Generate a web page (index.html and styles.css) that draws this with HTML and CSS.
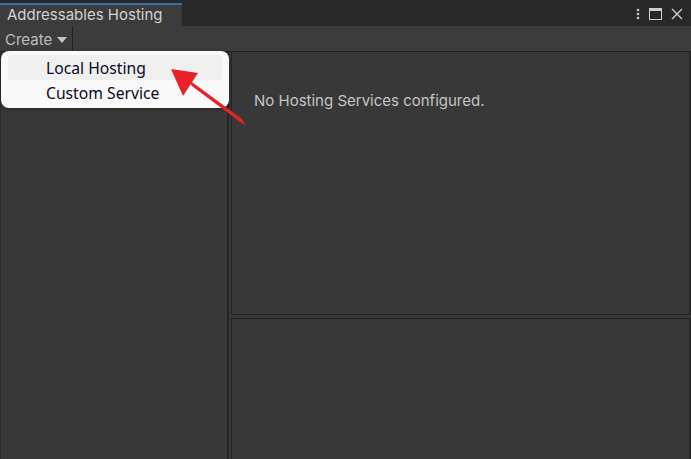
FILE: index.html
```html
<!DOCTYPE html>
<html lang="en">
<head>
    <meta charset="UTF-8">
    <title>Addressables Hosting</title>
    <link rel="stylesheet" href="styles.css">
</head>
<body>
    <div class="window">
        <div class="tabbar">
            <div class="tab">Addressables Hosting</div>
            <div class="win-icons">
                <svg width="4" height="12" viewBox="0 0 4 12"><circle cx="2" cy="2" r="1.3" fill="#c8c8c8"/><circle cx="2" cy="6" r="1.3" fill="#c8c8c8"/><circle cx="2" cy="10" r="1.3" fill="#c8c8c8"/></svg>
                <svg width="13" height="12" viewBox="0 0 13 12"><rect x="0.5" y="0.5" width="12" height="11" fill="none" stroke="#d0d0d0"/><rect x="0.5" y="0.5" width="12" height="2.5" fill="#d0d0d0"/></svg>
                <svg width="12" height="12" viewBox="0 0 12 12"><path d="M1 1 L11 11 M11 1 L1 11" stroke="#d0d0d0" stroke-width="1.4"/></svg>
            </div>
        </div>
        <div class="toolbar">
            <div class="create-btn">Create <span class="caret"></span></div>
        </div>
        <div class="content">
            <div class="left-pane"></div>
            <div class="right-col">
                <div class="pane pane-top">
                    <p class="empty">No Hosting Services configured.</p>
                </div>
                <div class="pane pane-bottom"></div>
            </div>
        </div>

        <div class="menu">
            <div class="menu-item active">Local Hosting</div>
            <div class="menu-item">Custom Service</div>
        </div>

        <svg class="arrow" width="691" height="459" viewBox="0 0 691 459">
            <path d="M188 80 L193 86 L244 124 L241 119 Z" fill="#e8202a" stroke="#e8202a" stroke-width="1.5" stroke-linejoin="round"/>
            <path d="M171 69 L198 73 L183 96 Z" fill="#e8202a"/>
        </svg>
    </div>
</body>
</html>
```

FILE: styles.css
```css
html, body {
    margin: 0;
    padding: 0;
}
body {
    font-family: Inter, 'Noto Sans', sans-serif;
    background: #383838;
    overflow: hidden;
}
.window {
    position: relative;
    width: 691px;
    height: 459px;
    display: flex;
    flex-direction: column;
    background: #383838;
}
.tabbar {
    height: 26px;
    background: #282828;
    display: flex;
    align-items: flex-end;
    box-sizing: border-box;
    padding-top: 3px;
}
.tab {
    width: 182px;
    height: 23px;
    box-sizing: border-box;
    background: #3c3c3c;
    border-top: 2px solid #3a6ea8;
    color: #d2d2d2;
    font-size: 15px;
    padding-left: 7px;
    line-height: 20px;
}
.win-icons {
    margin-left: auto;
    align-self: center;
    display: flex;
    align-items: center;
    gap: 9px;
    padding-right: 8px;
    margin-top: -2px;
}
.toolbar {
    height: 25px;
    background: #3c3c3c;
    border-bottom: 1px solid #232323;
    display: flex;
}
.create-btn {
    width: 73px;
    box-sizing: border-box;
    border-right: 1px solid #232323;
    color: #bdbdbd;
    font-size: 15px;
    padding: 2px 0 0 5px;
    line-height: 24px;
    display: flex;
    align-items: center;
    gap: 5px;
}
.caret {
    width: 0;
    height: 0;
    border-left: 5px solid transparent;
    border-right: 5px solid transparent;
    border-top: 6px solid #c4c4c4;
}
.content {
    flex: 1;
    display: flex;
}
.left-pane {
    border-right: 2px solid #242424;
    border-left: 1px solid #2a2a2a;
    box-sizing: border-box;
    width: 229px;
}
.right-col {
    flex: 1;
    display: flex;
    flex-direction: column;
    gap: 3px;
    padding-left: 2px;
}
.pane {
    border: 1px solid #242424;
    border-right-width: 2px;
}
.pane-top {
    height: 262px;
    border-top: none;
}
.pane-bottom {
    flex: 1;
    border-bottom: none;
}
.empty {
    margin: 39px 0 0 22px;
    color: #c4c4c4;
    font-size: 15px;
}
.menu {
    position: absolute;
    left: 1px;
    top: 51px;
    width: 228px;
    height: 57px;
    box-sizing: border-box;
    background: #f9f9f9;
    border-radius: 8px;
    box-shadow: 0 1px 4px rgba(0,0,0,0.35);
    padding: 4px 7px;
    font-family: 'Noto Sans', 'Open Sans', sans-serif;
}
.menu-item {
    height: 25px;
    line-height: 27px;
    padding-left: 38px;
    font-size: 15.7px;
    color: #0a0a1e;
    border-radius: 3px;
}
.menu-item.active {
    background: #efefef;
}
.arrow {
    position: absolute;
    left: 0;
    top: 0;
    pointer-events: none;
}
```
